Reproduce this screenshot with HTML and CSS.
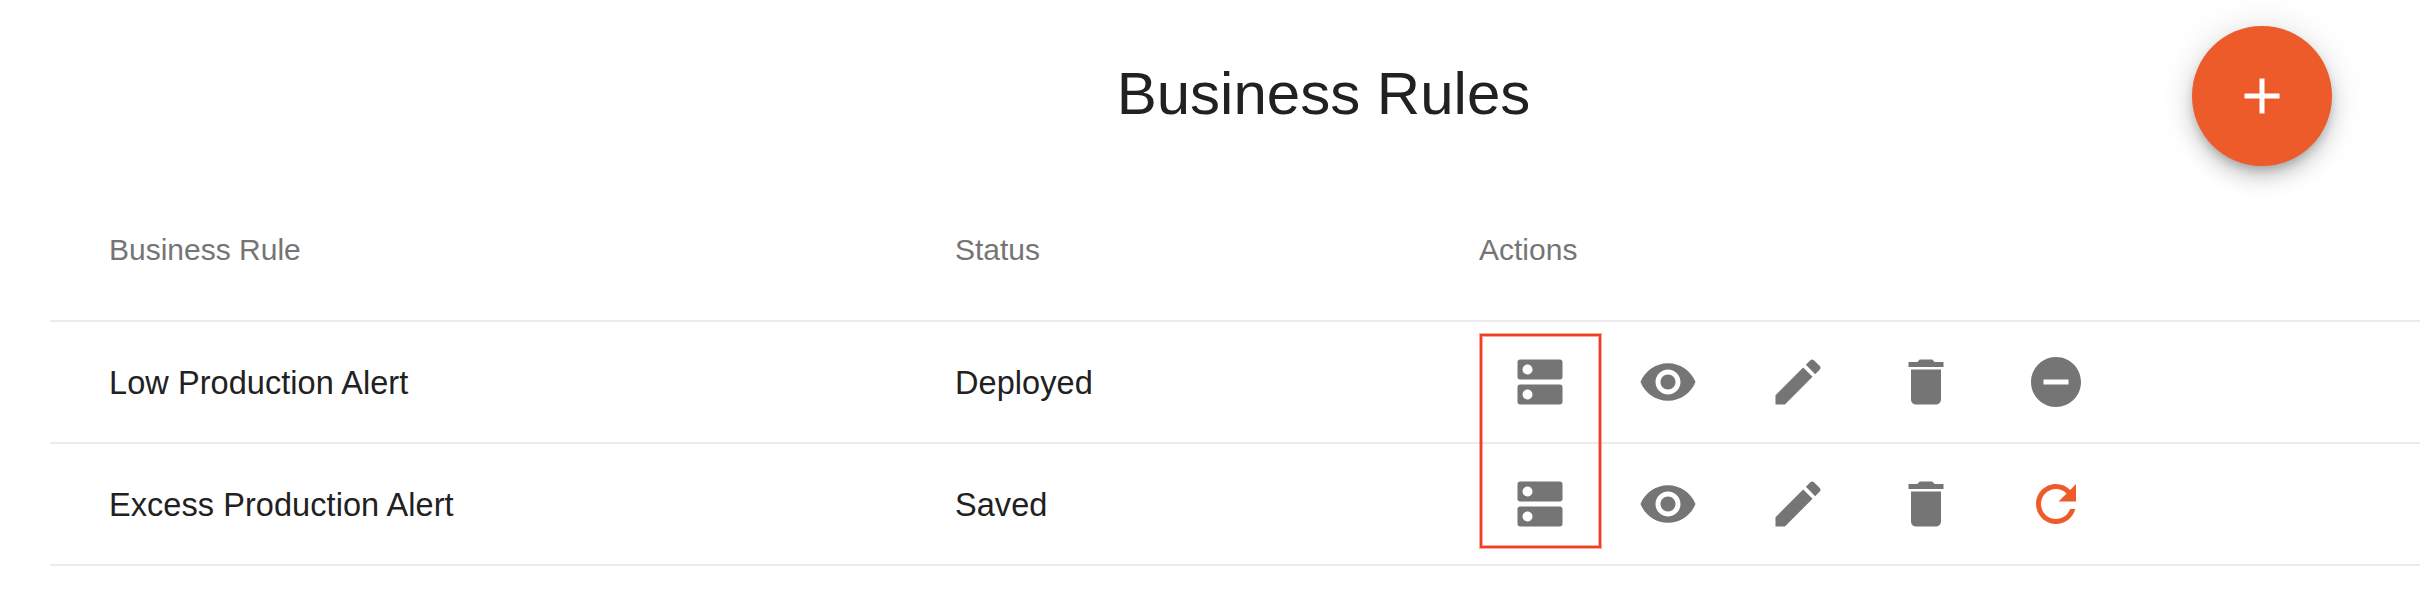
FILE: index.html
```html
<!DOCTYPE html>
<html lang="en">
<head>
<meta charset="utf-8">
<title>Business Rules</title>
<link rel="stylesheet" href="styles.css">
</head>
<body>
<svg class="defs" aria-hidden="true">
  <symbol id="dns" viewBox="0 0 24 24"><path d="M20 13H4c-.55 0-1 .45-1 1v6c0 .55.45 1 1 1h16c.55 0 1-.45 1-1v-6c0-.55-.45-1-1-1zM7 19c-1.1 0-2-.9-2-2s.9-2 2-2 2 .9 2 2-.9 2-2 2zM20 3H4c-.55 0-1 .45-1 1v6c0 .55.45 1 1 1h16c.55 0 1-.45 1-1V4c0-.55-.45-1-1-1zM7 9c-1.1 0-2-.9-2-2s.9-2 2-2 2 .9 2 2-.9 2-2 2z"/></symbol>
  <symbol id="eye" viewBox="0 0 24 24"><path d="M12 4.5C7 4.5 2.73 7.61 1 12c1.73 4.39 6 7.5 11 7.5s9.27-3.11 11-7.5c-1.73-4.39-6-7.5-11-7.5zM12 17c-2.76 0-5-2.24-5-5s2.24-5 5-5 5 2.24 5 5-2.24 5-5 5zm0-8c-1.66 0-3 1.34-3 3s1.34 3 3 3 3-1.34 3-3-1.34-3-3-3z"/></symbol>
  <symbol id="edit" viewBox="0 0 24 24"><path d="M3 17.25V21h3.75L17.81 9.94l-3.75-3.75L3 17.25zM20.71 7.04c.39-.39.39-1.02 0-1.41l-2.34-2.34c-.39-.39-1.02-.39-1.41 0l-1.83 1.83 3.75 3.75 1.83-1.83z"/></symbol>
  <symbol id="trash" viewBox="0 0 24 24"><path d="M6 19c0 1.1.9 2 2 2h8c1.1 0 2-.9 2-2V7H6v12zM19 4h-3.5l-1-1h-5l-1 1H5v2h14V4z"/></symbol>
  <symbol id="minus" viewBox="0 0 24 24"><path d="M12 2C6.48 2 2 6.48 2 12s4.48 10 10 10 10-4.48 10-10S17.52 2 12 2zm5 11H7v-2h10v2z"/></symbol>
  <symbol id="refresh" viewBox="0 0 24 24"><path d="M17.65 6.35C16.2 4.9 14.21 4 12 4c-4.42 0-7.99 3.58-7.99 8s3.57 8 7.99 8c3.73 0 6.84-2.55 7.73-6h-2.08c-.82 2.33-3.04 4-5.65 4-3.31 0-6-2.69-6-6s2.69-6 6-6c1.66 0 3.14.69 4.22 1.78L13 11h7V4l-2.35 2.35z"/></symbol>
  <symbol id="plus" viewBox="0 0 24 24"><path d="M19 13h-6v6h-2v-6H5v-2h6V5h2v6h6v2z"/></symbol>
</svg>
<main class="page">
  <header class="header">
    <h1 class="title">Business Rules</h1>
    <button class="fab" aria-label="Add"><svg class="icon"><use href="#plus"/></svg></button>
  </header>
  <section class="table">
    <div class="row head"><span>Business Rule</span><span>Status</span><span>Actions</span></div>
    <div class="row">
      <span class="cell">Low Production Alert</span><span class="cell">Deployed</span>
      <div class="actions">
        <svg class="icon"><use href="#dns"/></svg>
        <svg class="icon"><use href="#eye"/></svg>
        <svg class="icon"><use href="#edit"/></svg>
        <svg class="icon"><use href="#trash"/></svg>
        <svg class="icon"><use href="#minus"/></svg>
      </div>
    </div>
    <div class="row">
      <span class="cell">Excess Production Alert</span><span class="cell">Saved</span>
      <div class="actions">
        <svg class="icon"><use href="#dns"/></svg>
        <svg class="icon"><use href="#eye"/></svg>
        <svg class="icon"><use href="#edit"/></svg>
        <svg class="icon"><use href="#trash"/></svg>
        <svg class="icon accent"><use href="#refresh"/></svg>
      </div>
    </div>
    <div class="highlight"></div>
  </section>
</main>
</body>
</html>
```
FILE: styles.css
```css
* { box-sizing: border-box; }
body {
  margin: 0;
  background: #fff;
  color: #212121;
  font-family: "Liberation Sans", Arial, sans-serif;
  overflow: hidden;
}
.defs { display: none; }
.page { height: 600px; padding-left: 50px; }
.header {
  height: 200px;
  padding: 26px 88px 0 180px;
  display: grid;
  grid-template-columns: 140px 1fr 140px;
}
.title {
  grid-column: 2;
  margin: 0;
  padding-top: 34px;
  padding-left: 85px;
  font-size: 60px;
  font-weight: 400;
  line-height: 68px;
  text-align: center;
}
.fab {
  width: 140px;
  height: 140px;
  padding: 0;
  border: 0;
  border-radius: 50%;
  display: flex;
  align-items: center;
  justify-content: center;
  background: #ec5b29;
  color: #fff;
  box-shadow: 0 6px 10px -2px rgba(0, 0, 0, .2), 0 12px 20px rgba(0, 0, 0, .14), 0 2px 36px rgba(0, 0, 0, .12);
}
.icon { display: block; width: 60px; height: 60px; fill: currentColor; }
.table { position: relative; }
.row {
  display: grid;
  grid-template-columns: 846px 524px 1fr;
  align-items: center;
  height: 122px;
  padding-left: 59px;
  border-bottom: 2px solid #ebebeb;
  font-size: 32.5px;
}
.cell { padding-top: 2px; letter-spacing: .06px; }
.head { font-size: 30px; color: #757575; padding-bottom: 20px; }
.actions {
  display: grid;
  grid-template-columns: 128px 130px 128px 130px 60px;
  padding-left: 31px;
  color: #757575;
}
.accent { color: #ec5b29; }
.highlight {
  position: absolute;
  left: 1430px;
  top: 134px;
  width: 121px;
  height: 214px;
  border: 2px solid #ef4023;
  box-shadow: 0 0 0 1px rgba(239, 64, 35, .45), inset 0 0 0 1px rgba(239, 64, 35, .45);
}
```
